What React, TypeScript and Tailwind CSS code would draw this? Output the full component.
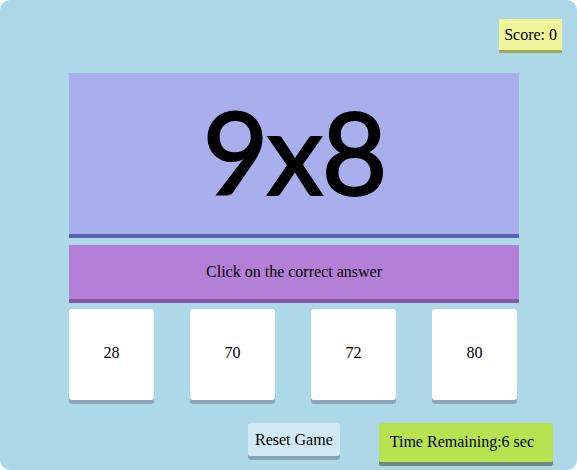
import { useState } from "react";

const answers = [28, 70, 72, 80];

export default function App() {
  const [score] = useState(0);

  return (
    <div className="w-[577px] h-[470px] bg-white">
      <div className="w-full h-full rounded-[10px] bg-[#add8e8] flex flex-col font-['Liberation_Serif',serif] text-[16px] text-black">
        <div className="flex justify-end pt-[19px] pr-[15px]">
          <div className="h-[31px] px-[5px] flex items-center bg-[#f0f59c] shadow-[0_3px_0_#a3ab5b]">
            Score: {score}
          </div>
        </div>

        <div className="ml-[69px] mt-[23px] w-[450px] h-[165px] bg-[#a9afed] border-b-4 border-[#5a5fae] flex items-center justify-center">
          <span className="font-['Lato',sans-serif] font-normal text-[114px] leading-none tracking-[-2px] pb-[6px] [-webkit-text-stroke:2px_black]">
            9x8
          </span>
        </div>

        <div className="ml-[69px] mt-[7px] w-[450px] h-[58px] bg-[#b480d7] border-b-4 border-[#8358a8] flex items-center justify-center">
          Click on the correct answer
        </div>

        <div className="ml-[69px] mt-[6px] flex gap-[36px]">
          {answers.map((a) => (
            <button
              key={a}
              className="w-[85px] h-[91px] bg-white rounded-[3px] shadow-[0_4px_0_#8aa9b8] flex items-center justify-center pb-[4px]"
            >
              {a}
            </button>
          ))}
        </div>

        <div className="flex mt-[23px] ml-[248px] gap-[39px] items-start">
          <button className="h-[33px] px-[7px] bg-[#d0e9f5] rounded-[3px] shadow-[0_4px_0_#87a4b3] flex items-center">
            Reset Game
          </button>
          <div className="h-[39px] w-[174px] pl-[11px] bg-[#b6e34f] rounded-[2px] shadow-[0_4px_0_#6f8a78] flex items-center pb-[2px]">
            Time Remaining:6 sec
          </div>
        </div>
      </div>
    </div>
  );
}
